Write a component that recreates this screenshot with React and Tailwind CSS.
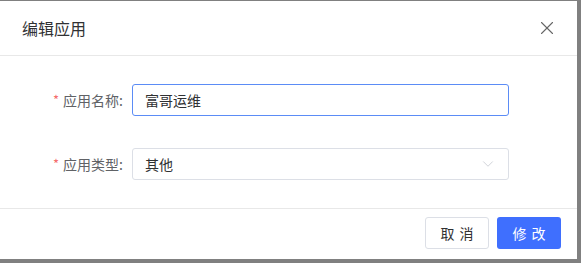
import { X, ChevronDown } from "lucide-react";

const font = { fontFamily: '"Noto Sans CJK SC", "Noto Sans", sans-serif' };

function Field({ label, children }) {
  return (
    <div className="flex items-center h-8">
      <label className="w-[132px] pr-[9px] flex justify-end items-center text-[14px] text-[#606266]">
        <span className="text-[#f56c6c] mr-1 text-[13px]">*</span>
        {label}:
      </label>
      {children}
    </div>
  );
}

function Button({ chars, className }) {
  return (
    <button className={`w-16 h-8 rounded-[3px] text-[14px] flex items-center justify-center gap-[5px] ${className}`}>
      <span>{chars[0]}</span>
      <span>{chars[1]}</span>
    </button>
  );
}

export default function App() {
  return (
    <div className="w-[581px] h-[263px] bg-[#808080] pt-px overflow-hidden" style={font}>
      <div className="w-[577px] h-[258px] bg-white flex flex-col">
        {/* Header */}
        <div className="h-[55px] flex items-center justify-between pl-[22px] pr-[19px] border-b border-[#e8e8e8] shrink-0">
          <span className="text-[16px] text-[#303133]">编辑应用</span>
          <X size={22} strokeWidth={1.2} className="text-[#666]" />
        </div>

        {/* Body */}
        <div className="flex-1 pt-[28px] flex flex-col gap-8 border-b border-[#e8e8e8]">
          <Field label="应用名称">
            <div className="w-[377px] h-8 border border-[#5b8cf6] rounded-[3px] flex items-center px-3 text-[14px] text-[#303133]">
              富哥运维
            </div>
          </Field>
          <Field label="应用类型">
            <div className="w-[377px] h-8 border border-[#dcdfe6] rounded-[3px] flex items-center justify-between pl-3 pr-[11px] text-[14px] text-[#303133]">
              <span>其他</span>
              <ChevronDown size={18} strokeWidth={1} className="text-[#c0c4cc]" />
            </div>
          </Field>
        </div>

        {/* Footer */}
        <div className="h-[50px] flex items-center justify-end gap-2 pr-4 pb-[2px] shrink-0">
          <Button chars="取消" className="border border-[#dcdfe6] bg-white text-[#303133]" />
          <Button chars="修改" className="bg-[#3f6ffe] text-white" />
        </div>
      </div>
    </div>
  );
}
